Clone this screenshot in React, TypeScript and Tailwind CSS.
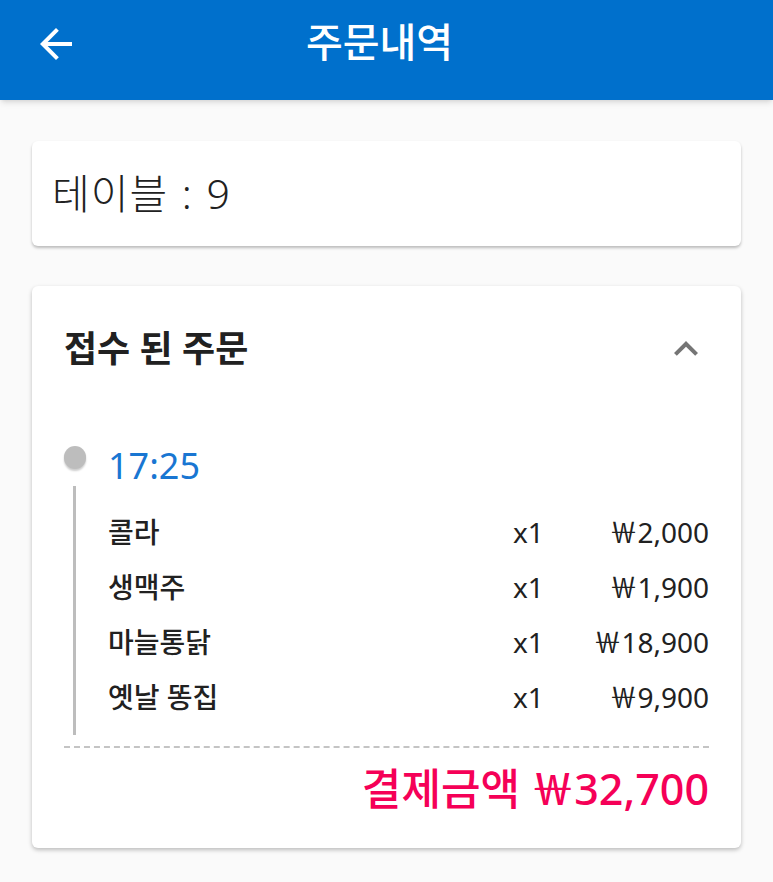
import React from "react";

const ITEMS = [
  { name: "콜라", qty: 1, price: "2,000" },
  { name: "생맥주", qty: 1, price: "1,900" },
  { name: "마늘통닭", qty: 1, price: "18,900" },
  { name: "옛날 똥집", qty: 1, price: "9,900" },
];

const FONT = { fontFamily: '"Noto Sans", "Noto Sans CJK KR", sans-serif' };

// full-width won sign, like the reference
const WON = "\uFFE6";

function ArrowBack() {
  return (
    <svg viewBox="0 0 24 24" className="h-12 w-12" fill="white">
      <path d="M20 11H7.83l5.59-5.59L12 4l-8 8 8 8 1.41-1.41L7.83 13H20v-2z" />
    </svg>
  );
}

function ExpandLess() {
  return (
    <svg viewBox="0 0 24 24" className="h-12 w-12" fill="#757575">
      <path d="M12 8l-6 6 1.41 1.41L12 10.83l4.59 4.58L18 14z" />
    </svg>
  );
}

export default function App() {
  return (
    <div className="min-h-[882px] w-full bg-[#fafafa] text-[#212121]" style={FONT}>
      <header className="relative flex h-[100px] items-center justify-center bg-[#0070cc] shadow-md">
        <button type="button" aria-label="back" className="absolute left-[32px] top-[20px]">
          <ArrowBack />
        </button>
        <h1 className="mb-[16px] mr-[14px] text-[40px] font-medium leading-none text-white">주문내역</h1>
      </header>

      <main className="flex flex-col gap-[40px] px-[32px] pt-[41px] pb-[34px]">
        <section className="flex h-[105px] items-center rounded-[6px] bg-white px-[20px] shadow-[0_2px_3px_rgba(0,0,0,0.25)]">
          <p className="text-[41px] font-light leading-none tracking-[1px]">
            테이블<span className="mx-[2px]"> : </span>9
          </p>
        </section>

        <section className="rounded-[6px] bg-white px-[32px] pt-[41px] pb-[36px] shadow-[0_2px_4px_rgba(0,0,0,0.25)]">
          <div className="flex h-[44px] items-center justify-between">
            <h2 className="text-[36px] font-bold leading-[44px]">접수 된 주문</h2>
            <span className="-mr-[1px]">
              <ExpandLess />
            </span>
          </div>

          <div className="mt-[75px]">
            <div className="flex h-[40px] items-start">
              <span className="h-[23px] w-[22px] rounded-full bg-[#bdbdbd] shadow-[0_2px_2px_rgba(0,0,0,0.2)]" />
              <span className="ml-[22px] text-[36px] font-normal leading-[40px] text-[#1976d2]">17:25</span>
            </div>
            <div className="ml-[9px] border-l-[3px] border-[#bdbdbd] pl-[32px] pt-[18px] pb-[11px]">
              {ITEMS.map((item) => (
                <div key={item.name} className="flex h-[55px] items-center text-[28px] font-medium leading-none">
                  <span className="flex-1">{item.name}</span>
                  <span className="w-[28px] font-normal">x{item.qty}</span>
                  <span className="w-[168px] text-right font-normal">
                    {WON}
                    {item.price}
                  </span>
                </div>
              ))}
            </div>
          </div>

          <div className="mt-[11px] border-t-2 border-dashed border-[#c4c4c4]" />

          <div className="mt-[16px] flex h-[48px] items-center justify-end">
            <p className="text-[43px] font-medium leading-none text-[#f50057]">
              결제금액 {WON}32,700
            </p>
          </div>
        </section>
      </main>
    </div>
  );
}
